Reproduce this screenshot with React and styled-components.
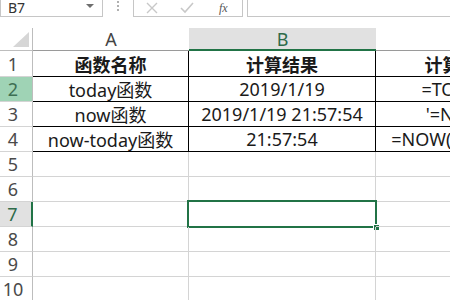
import styled, { createGlobalStyle } from 'styled-components';

const GlobalStyle = createGlobalStyle`
  html, body {
    margin: 0;
    padding: 0;
    background: #ffffff;
    overflow: hidden;
  }
  body {
    font-family: "Noto Sans", "Noto Sans CJK SC", sans-serif;
  }
`;

const Page = styled.div`
  width: 450px;
  height: 300px;
  overflow: hidden;
  background: #fff;
`;

const TopBar = styled.div`
  display: flex;
  align-items: flex-start;
  height: 17px;
  margin-bottom: 11px;
`;

const NameBox = styled.div`
  box-sizing: border-box;
  width: 103px;
  height: 17px;
  border: 1px solid #c6c6c6;
  border-top: none;
  display: flex;
  align-items: flex-start;
  justify-content: space-between;
  padding: 1px 4px 0 7px;
  font-size: 14px;
  line-height: 14px;
  color: #333;
`;

const Caret = styled.span`
  width: 0;
  height: 0;
  border-left: 4px solid transparent;
  border-right: 4px solid transparent;
  border-top: 4px solid #6e6e6e;
  margin: 3px 4px 0 0;
`;

const Dots = styled.div`
  width: 30px;
  display: flex;
  flex-direction: column;
  align-items: center;
  gap: 2px;
  padding-top: 1px;
  span {
    width: 2px;
    height: 2px;
    background: #b0b0b0;
  }
`;

const ButtonBox = styled.div`
  box-sizing: border-box;
  width: 110px;
  height: 17px;
  border: 1px solid #c6c6c6;
  border-top: none;
  display: flex;
  align-items: flex-start;
  padding: 2px 0 0 12px;
  gap: 22px;
`;

const Fx = styled.span`
  font-family: "Liberation Serif", serif;
  font-style: italic;
  font-size: 12px;
  line-height: 12px;
  color: #555;
  margin-left: 3px;
`;

const FormulaInput = styled.div`
  flex: 1;
  box-sizing: border-box;
  height: 17px;
  margin-left: 4px;
  border-left: 1px solid #c6c6c6;
  border-bottom: 1px solid #c6c6c6;
`;

const Sheet = styled.div`
  display: grid;
  grid-template-columns: 33px 156px 187px 170px;
  grid-template-rows: 23px 26px repeat(9, 25px);
`;

const Corner = styled.div`
  box-sizing: border-box;
  border-right: 1px solid #bdbdbd;
  border-bottom: 1px solid #bdbdbd;
  display: flex;
  align-items: flex-end;
  justify-content: flex-end;
  padding: 0 3px 3px 0;
`;

const ColHead = styled.div`
  box-sizing: border-box;
  display: flex;
  align-items: center;
  justify-content: center;
  font-size: 18px;
  color: ${p => (p.$active ? '#2f6b4a' : '#444')};
  background: ${p => (p.$active ? '#e1e1e1' : '#fff')};
  border-bottom: ${p => (p.$active ? '2px solid #217346' : '1px solid #9a9a9a')};
  padding-top: ${p => (p.$active ? '1px' : '0')};
`;

const RowHead = styled.div`
  box-sizing: border-box;
  display: flex;
  align-items: center;
  justify-content: center;
  padding-right: 6px;
  font-size: 18px;
  color: ${p => (p.$state === 'green' ? '#3d6f53' : p.$state === 'sel' ? '#2f6b4a' : '#4a4a4a')};
  background: ${p => (p.$state === 'green' ? '#9fd3b5' : p.$state === 'sel' ? '#e1e1e1' : '#fff')};
  border-right: ${p => (p.$state === 'sel' ? '2px solid #217346' : '1px solid #bdbdbd')};
  border-bottom: 1px solid #d4d4d4;
`;

const Cell = styled.div`
  box-sizing: border-box;
  position: relative;
  display: flex;
  align-items: center;
  justify-content: center;
  white-space: nowrap;
  font-size: 18px;
  font-weight: ${p => (p.$bold ? 700 : 400)};
  color: #1a1a1a;
  border-right: 1px solid ${p => (p.$ruled ? '#000' : '#d4d4d4')};
  border-bottom: 1px solid ${p => (p.$ruled ? '#000' : '#d4d4d4')};
`;

const Selection = styled.div`
  position: absolute;
  left: -2px;
  top: -2px;
  right: -2px;
  bottom: -2px;
  border: 2px solid #217346;
  pointer-events: none;
`;

const Handle = styled.div`
  position: absolute;
  right: -5px;
  bottom: -5px;
  width: 5px;
  height: 5px;
  background: #217346;
  border: 1px solid #fff;
`;

const rows = [
  ['函数名称', '计算结果', '计算公式'],
  ['today函数', '2019/1/19', '=TODAY()'],
  ['now函数', '2019/1/19 21:57:54', "'=NOW()"],
  ['now-today函数', '21:57:54', '=NOW()-TODAY()'],
];

const CrossIcon = () => (
  <svg width="12" height="12" viewBox="0 0 12 12">
    <path d="M1 1 L11 11 M11 1 L1 11" stroke="#c8c8c8" strokeWidth="1.4" fill="none" />
  </svg>
);

const CheckIcon = () => (
  <svg width="14" height="12" viewBox="0 0 14 12">
    <path d="M1 6 L5 10 L13 1" stroke="#c8c8c8" strokeWidth="1.6" fill="none" />
  </svg>
);

export default function App() {
  return (
    <Page>
      <GlobalStyle />
      <TopBar>
        <NameBox>
          <span>B7</span>
          <Caret />
        </NameBox>
        <Dots><span /><span /><span /></Dots>
        <ButtonBox>
          <CrossIcon />
          <CheckIcon />
          <Fx>fx</Fx>
        </ButtonBox>
        <FormulaInput />
      </TopBar>

      <Sheet>
        <Corner>
          <svg width="16" height="15" viewBox="0 0 16 15">
            <polygon points="16,0 16,15 0,15" fill="#d6d6d6" />
          </svg>
        </Corner>
        <ColHead>A</ColHead>
        <ColHead $active>B</ColHead>
        <ColHead />

        {Array.from({ length: 10 }, (_, i) => {
          const n = i + 1;
          const data = rows[i];
          const state = n === 2 ? 'green' : n === 7 ? 'sel' : '';
          return [
            <RowHead key={`h${n}`} $state={state}>{n}</RowHead>,
            ...[0, 1, 2].map(c => (
              <Cell key={`c${n}-${c}`} $ruled={!!data} $bold={n === 1}>
                {data ? data[c] : ''}
                {n === 7 && c === 1 && (
                  <Selection>
                    <Handle />
                  </Selection>
                )}
              </Cell>
            )),
          ];
        })}
      </Sheet>
    </Page>
  );
}
